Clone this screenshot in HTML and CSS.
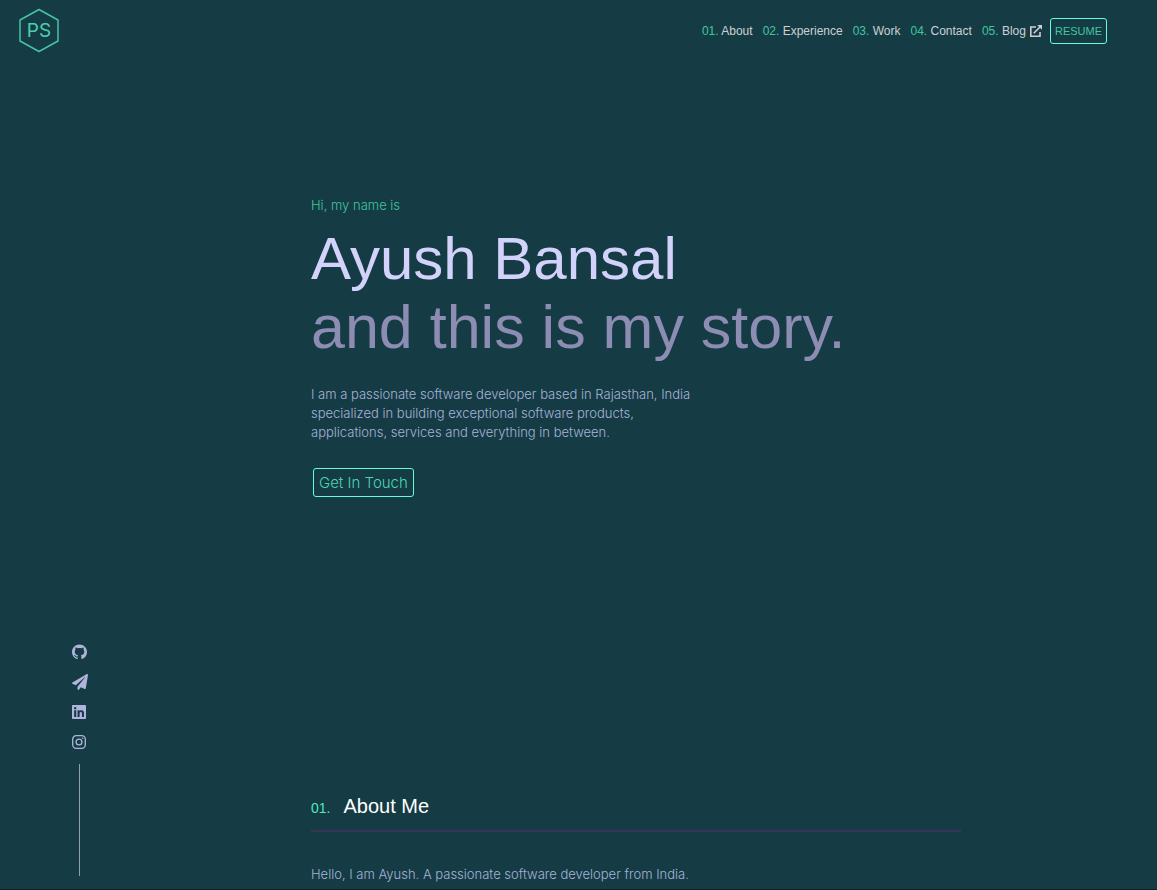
FILE: index.html
```html
<!DOCTYPE html>
<html lang="en">
<head>
<meta charset="utf-8">
<meta name="viewport" content="width=device-width, initial-scale=1">
<title>Ayush Bansal</title>
<link rel="stylesheet" href="styles.css">
</head>
<body>
<header class="topbar">
  <a class="logo" href="#" aria-label="Home">
    <svg width="42" height="46" viewBox="0 0 42 46">
      <path d="M21 1.500 40 12V33L21 43.500 2 33V12Z" fill="none" stroke="#45c3a5" stroke-width="1.500" stroke-linejoin="round"/>
      <text class="logo-text" x="21" y="29" text-anchor="middle">PS</text>
    </svg>
  </a>
  <nav class="nav">
    <a class="nav-link" href="#about"><span class="num">01.</span> About</a>
    <a class="nav-link" href="#experience"><span class="num">02.</span> Experience</a>
    <a class="nav-link" href="#work"><span class="num">03.</span> Work</a>
    <a class="nav-link" href="#contact"><span class="num">04.</span> Contact</a>
    <a class="nav-link blog" href="#blog"><span><span class="num">05.</span> Blog</span>
      <svg width="12" height="12" viewBox="0 0 12 12" fill="none" stroke="currentColor" stroke-width="1.600"><path d="M6 2H.8V11.200H10V7M3.700 8.300 10 2"/><path d="M7.200 0H12V4.800Z" fill="currentColor" stroke="none"/></svg>
    </a>
    <a class="resume" href="#resume">RESUME</a>
  </nav>
</header>
<div class="page">
  <aside class="social">
    <a href="#github" aria-label="GitHub"><svg width="15" height="16" viewBox="0 0 16 16" fill="currentColor"><path d="M8 0C3.580 0 0 3.580 0 8c0 3.540 2.290 6.530 5.470 7.590.4.070.55-.17.55-.38 0-.19-.01-.82-.01-1.490-2.010.37-2.530-.49-2.690-.94-.09-.23-.48-.94-.82-1.130-.28-.15-.68-.52-.01-.53.63-.01 1.080.58 1.230.82.72 1.210 1.870.87 2.330.66.070-.52.28-.87.51-1.070-1.780-.2-3.640-.89-3.640-3.950 0-.87.31-1.590.82-2.150-.08-.2-.36-1.020.08-2.120 0 0 .67-.21 2.200.82.64-.18 1.320-.27 2-.27s1.360.09 2 .27c1.530-1.040 2.200-.82 2.200-.82.44 1.100.16 1.920.08 2.120.51.56.82 1.270.82 2.150 0 3.070-1.870 3.750-3.650 3.950.29.25.54.73.54 1.480 0 1.070-.01 1.930-.01 2.200 0 .21.15.46.55.38A8 8 0 0 0 16 8c0-4.420-3.580-8-8-8z"/></svg></a>
    <a href="#telegram" aria-label="Telegram"><svg width="16" height="16" viewBox="0 0 512 512" fill="currentColor"><path d="M476 3.200 12.500 270.600c-18.100 10.400-15.800 35.600 2.200 43.200L121 358.400l287.300-253.200c5.500-4.900 13.300 2.600 8.600 8.300L176 407v80.500c0 23.600 28.500 32.900 42.500 15.800L282 426l124.600 52.200c14.200 6 30.400-2.900 33-18.200l72-432C515 7.800 493.300-6.800 476 3.200z"/></svg></a>
    <a href="#linkedin" aria-label="LinkedIn"><svg width="14" height="16" viewBox="0 0 448 512" fill="currentColor"><path d="M416 32H31.900C14.300 32 0 46.500 0 64.300v383.400C0 465.500 14.300 480 31.900 480H416c17.600 0 32-14.500 32-32.300V64.300c0-17.800-14.400-32.300-32-32.300zM135.400 416H69V202.200h66.500V416zm-33.200-243c-21.300 0-38.500-17.300-38.500-38.500S80.900 96 102.200 96c21.200 0 38.500 17.300 38.500 38.500 0 21.300-17.200 38.500-38.500 38.500zm282.100 243h-66.400V312c0-24.800-.5-56.700-34.500-56.700-34.600 0-39.900 27-39.900 54.900V416h-66.400V202.200h63.700v29.200h.9c8.900-16.800 30.600-34.500 62.900-34.500 67.200 0 79.700 44.300 79.700 101.900V416z"/></svg></a>
    <a href="#instagram" aria-label="Instagram"><svg width="14" height="16" viewBox="0 0 14 16" fill="none" stroke="currentColor" stroke-width="1.300"><rect x=".7" y="1.700" width="12.600" height="12.600" rx="3.500"/><circle cx="7" cy="8" r="2.900"/><circle cx="10.700" cy="4.300" r=".8" fill="currentColor" stroke="none"/></svg></a>
    <div class="rule"></div>
  </aside>
  <main class="content">
    <section class="hero">
      <p class="hello">Hi, my name is</p>
      <h1 class="title">Ayush Bansal</h1>
      <h2 class="title tagline">and this is my story.</h2>
      <p class="text intro">I am a passionate software developer based in Rajasthan, India<br>specialized in building exceptional software products,<br>applications, services and everything in between.</p>
      <a class="cta" href="#contact">Get In Touch</a>
    </section>
    <section class="about" id="about">
      <h2 class="section-title"><span class="section-num">01.</span>About Me</h2>
      <p class="text">Hello, I am Ayush. A passionate software developer from India.</p>
    </section>
  </main>
</div>
</body>
</html>
```
FILE: styles.css
```css
* { box-sizing: border-box; }
body {
  margin: 0;
  min-height: 100vh;
  display: flex;
  flex-direction: column;
  background: #153c45;
  border-bottom: 1px solid #0c2025;
  font-family: "Liberation Sans", Arial, sans-serif;
  color: #a8b2d8;
}
a { color: inherit; text-decoration: none; }
h1, h2, p { margin: 0; }
svg { display: block; }

.topbar {
  display: flex;
  justify-content: space-between;
  align-items: center;
  height: 62px;
  padding: 0 50px 0 18px;
}
.logo-text { font: 400 19px Inter, sans-serif; fill: #4bd0af; }
.nav { display: flex; align-items: center; gap: 10px; font-size: 12px; color: #ccd0d4; }
.num { color: #3fc79f; }
.blog { display: flex; align-items: center; gap: 4px; }
.resume {
  margin-left: -2px;
  padding: 0 4px;
  border: 1px solid #64ffda;
  border-radius: 3px;
  color: #3fc79f;
  font-size: 11px;
  line-height: 24px;
}

.page { flex: 1; display: grid; grid-template-columns: 115px 1fr; }
.social {
  align-self: end;
  display: flex;
  flex-direction: column;
  gap: 14px;
  padding: 0 0 13px 72px;
  color: #b0b4dc;
}
.rule { width: 1px; height: 112px; margin-left: 7px; background: #8f9fb8; }
.content { width: 100%; max-width: 650px; margin: 0 auto; }

.hero { padding-top: 133px; }
.hello { color: #3fc79f; font: 300 13px/20px Inter, sans-serif; }
.title { margin-top: 10px; font-size: 60px; font-weight: 400; line-height: 68px; color: #d2d2fa; white-space: nowrap; }
.tagline { margin-top: 0; font-size: 61px; color: #8d8cb2; }
.text { font: 300 13px/19px Inter, sans-serif; }
.intro { margin-top: 24px; }
.cta {
  display: inline-block;
  margin: 26px 0 0 2px;
  padding: 0 5px;
  border: 1px solid #64ffda;
  border-radius: 3px;
  color: #48d8b0;
  font: 300 15px/27px Inter, sans-serif;
}
.about { padding: 294px 0 4px; }
.section-title {
  margin-bottom: 33px;
  padding-bottom: 7px;
  border-bottom: 2px solid #3a3456;
  color: #fff;
  font-size: 20px;
  font-weight: 400;
  line-height: 30px;
}
.section-num { margin-right: 13px; color: #48eabb; font-size: 14px; }
```
